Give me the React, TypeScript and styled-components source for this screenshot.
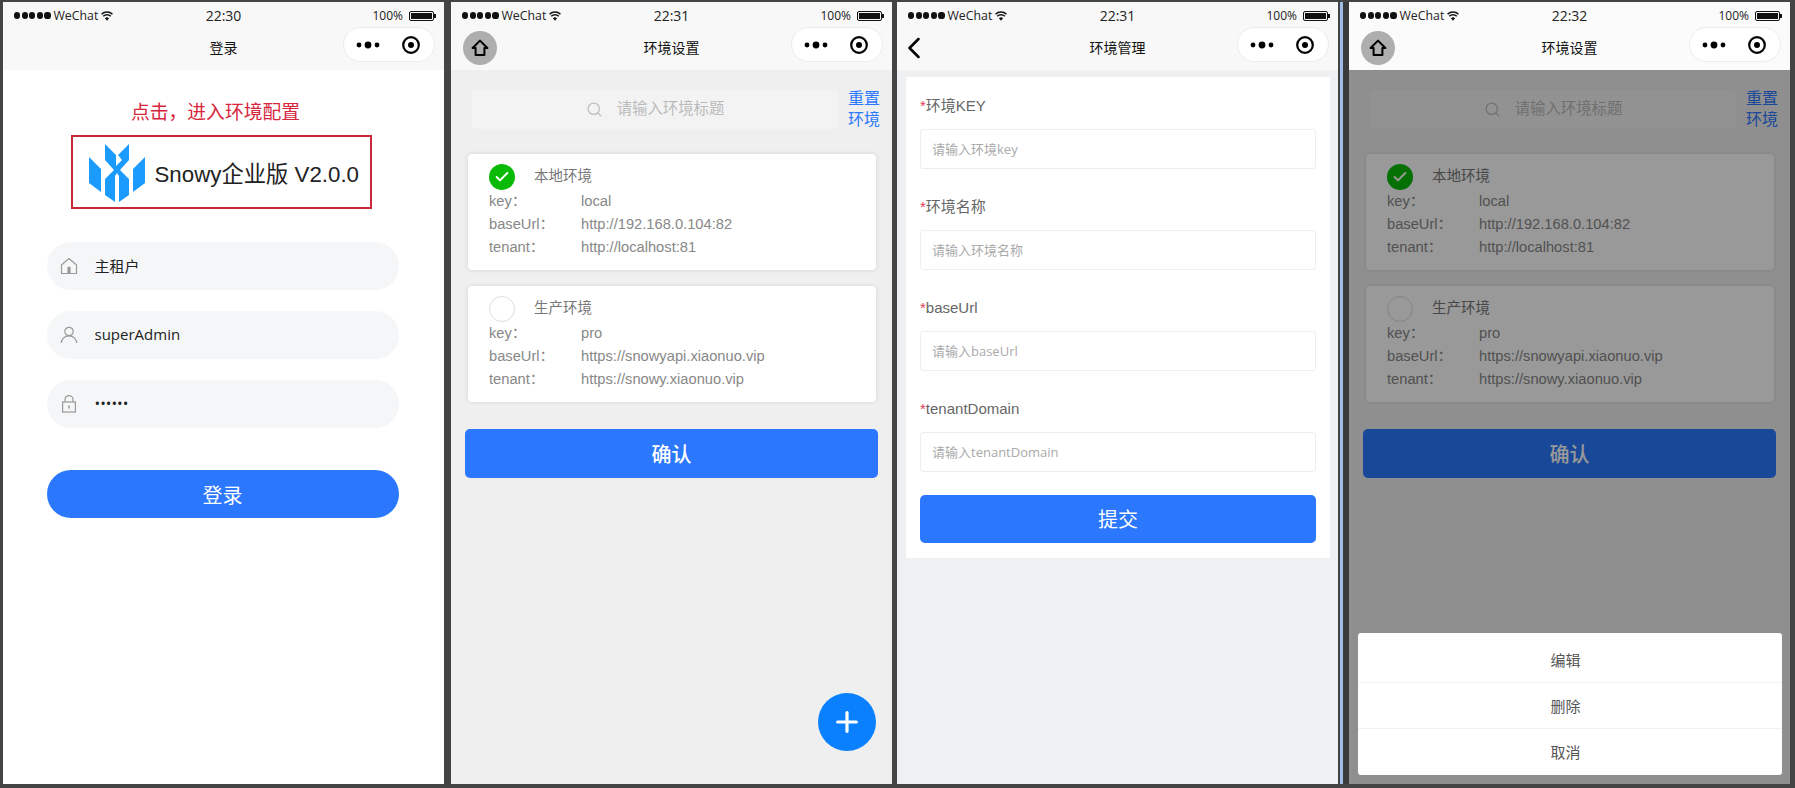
import React from "react";
import styled, { createGlobalStyle } from "styled-components";
import { Check, ChevronLeft, Plus, Search } from "lucide-react";

const UI_FONT = `"Open Sans", "Noto Sans CJK SC", sans-serif`;
const ARIAL_FONT = `"Liberation Sans", "Noto Sans CJK SC", sans-serif`;
const BLUE = "#2b78fe";

const ENVS = [
  {
    title: "本地环境",
    key: "local",
    baseUrl: "http://192.168.0.104:82",
    tenant: "http://localhost:81",
    checked: true,
  },
  {
    title: "生产环境",
    key: "pro",
    baseUrl: "https://snowyapi.xiaonuo.vip",
    tenant: "https://snowy.xiaonuo.vip",
    checked: false,
  },
];

const FIELDS = [
  { label: "环境KEY", placeholder: "请输入环境key" },
  { label: "环境名称", placeholder: "请输入环境名称" },
  { label: "baseUrl", placeholder: "请输入baseUrl" },
  { label: "tenantDomain", placeholder: "请输入tenantDomain" },
];

function StatusBar({ time }: { time: string }) {
  return (
    <StatusRow>
      <StatusLeft>
        <SignalDots>
          {[0, 1, 2, 3, 4].map((i) => (
            <SignalDot key={i} />
          ))}
        </SignalDots>
        <span>WeChat</span>
        <svg width="12" height="10" viewBox="0 0 12 10">
          <path d="M0.5 3.2a7.8 7.8 0 0 1 11 0" fill="none" stroke="#111" strokeWidth="1.5" />
          <path d="M2.2 5.3a5.4 5.4 0 0 1 7.6 0" fill="none" stroke="#111" strokeWidth="1.5" />
          <path d="M3.9 7.2a3 3 0 0 1 4.2 0L6 9.8z" fill="#111" />
        </svg>
      </StatusLeft>
      <StatusTime>{time}</StatusTime>
      <StatusRight>
        <span>100%</span>
        <Battery>
          <BatteryFill />
        </Battery>
        <BatteryTip />
      </StatusRight>
    </StatusRow>
  );
}

function Capsule() {
  return (
    <CapsuleBox>
      <svg width="24" height="8" viewBox="0 0 24 8">
        <circle cx="3" cy="4" r="2.4" fill="#000" />
        <circle cx="12" cy="4" r="3.4" fill="#000" />
        <circle cx="21" cy="4" r="2.4" fill="#000" />
      </svg>
      <svg width="18" height="18" viewBox="0 0 18 18">
        <circle cx="9" cy="9" r="7.8" fill="none" stroke="#000" strokeWidth="2.2" />
        <circle cx="9" cy="9" r="3" fill="#000" />
      </svg>
    </CapsuleBox>
  );
}

function HomeBadge() {
  return (
    <HomeButton>
      <svg width="18" height="18" viewBox="0 0 18 18">
        <path
          d="M9 1.6 16.4 9H13.4V16H4.600V9H1.600Z"
          fill="none"
          stroke="#000"
          strokeWidth="2"
          strokeLinejoin="round"
        />
      </svg>
    </HomeButton>
  );
}

function NavBar({
  title,
  time,
  left,
  $bright,
}: {
  title: string;
  time: string;
  left?: React.ReactNode;
  $bright?: boolean;
}) {
  return (
    <Header $bright={$bright}>
      <StatusBar time={time} />
      <NavRow>
        <NavLeft>{left}</NavLeft>
        <NavTitle>{title}</NavTitle>
        <Capsule />
      </NavRow>
    </Header>
  );
}

function LoginField({
  icon,
  value,
  type = "text",
}: {
  icon: React.ReactNode;
  value: string;
  type?: string;
}) {
  return (
    <PillField>
      <PillIcon>{icon}</PillIcon>
      <PillInput type={type} value={value} readOnly />
    </PillField>
  );
}

function LoginPage() {
  return (
    <Phone>
      <NavBar title="登录" time="22:30" />
      <LoginBody>
        <Hint>点击，进入环境配置</Hint>
        <LogoBox>
          <svg width="58" height="59" viewBox="0 0 58 59">
            <g fill="#1a9bfd">
              <polygon points="1,14 13,26 13,49 1,40" />
              <polygon points="57,14 45,26 45,49 57,40" />
              <polygon points="17,1 28,12 28,23 34,17 30,12 41,1 41,17 32,27 41,36 41,52 31,59 31,33 29,30 27,33 27,59 17,52 17,36 26,27 17,17" />
            </g>
          </svg>
          <LogoText>Snowy企业版 V2.0.0</LogoText>
        </LogoBox>
        <LoginForm>
          <LoginField
            value="主租户"
            icon={
              <svg width="18" height="18" viewBox="0 0 18 18">
                <path
                  d="M1.5 8 9 1.5 16.5 8V16.5H1.5Z"
                  fill="none"
                  stroke="#999"
                  strokeWidth="1.2"
                  strokeLinejoin="round"
                />
                <path d="M7.4 16.5V11a1.6 1.6 0 0 1 3.2 0V16.5Z" fill="#999" />
              </svg>
            }
          />
          <LoginField
            value="superAdmin"
            icon={
              <svg width="18" height="18" viewBox="0 0 18 18">
                <circle cx="9" cy="5.5" r="4.2" fill="none" stroke="#999" strokeWidth="1.2" />
                <path d="M1.2 17c.6-4.4 3.8-7.2 7.8-7.2s7.2 2.8 7.8 7.2" fill="none" stroke="#999" strokeWidth="1.2" />
              </svg>
            }
          />
          <LoginField
            value="123456"
            type="password"
            icon={
              <svg width="18" height="18" viewBox="0 0 18 18">
                <rect x="2.6" y="7" width="12.8" height="10" fill="none" stroke="#999" strokeWidth="1.2" />
                <path d="M5 7V4.6a4 4 0 0 1 8 0V7" fill="none" stroke="#999" strokeWidth="1.2" />
                <rect x="8.2" y="10.5" width="1.6" height="3" fill="#999" />
              </svg>
            }
          />
        </LoginForm>
        <RoundButton>登录</RoundButton>
      </LoginBody>
    </Phone>
  );
}

function EnvSettingsPage({ time, withSheet }: { time: string; withSheet?: boolean }) {
  return (
    <Phone $seam={withSheet}>
      <NavBar title="环境设置" time={time} left={<HomeBadge />} $bright={withSheet} />
      <GrayBody>
        <SearchRow>
          <SearchBox>
            <Search size={17} color="#bdbdbd" strokeWidth={1.8} />
            <SearchText>请输入环境标题</SearchText>
          </SearchBox>
          <ResetLink>重置环境</ResetLink>
        </SearchRow>
        <CardList>
          {ENVS.map((env) => (
            <EnvCard key={env.key}>
              <CardHead>
                <CheckCircle $checked={env.checked}>
                  {env.checked && <Check size={16} color="#fff" strokeWidth={3} />}
                </CheckCircle>
                <CardTitle>{env.title}</CardTitle>
              </CardHead>
              <InfoRow>
                <InfoLabel>key：</InfoLabel>
                <span>{env.key}</span>
              </InfoRow>
              <InfoRow>
                <InfoLabel>baseUrl：</InfoLabel>
                <span>{env.baseUrl}</span>
              </InfoRow>
              <InfoRow>
                <InfoLabel>tenant：</InfoLabel>
                <span>{env.tenant}</span>
              </InfoRow>
            </EnvCard>
          ))}
        </CardList>
        <ConfirmButton>确认</ConfirmButton>
        {!withSheet && (
          <Fab>
            <Plus size={32} color="#fff" strokeWidth={2.4} />
          </Fab>
        )}
        {withSheet && (
          <>
            <Overlay />
            <ActionSheet>
              <SheetItem>编辑</SheetItem>
              <SheetItem>删除</SheetItem>
              <SheetItem>取消</SheetItem>
            </ActionSheet>
          </>
        )}
      </GrayBody>
    </Phone>
  );
}

function EnvManagePage() {
  return (
    <Phone>
      <NavBar title="环境管理" time="22:31" left={<BackIcon size={36} strokeWidth={1.7} />} />
      <ManageBody>
        <FormCard>
          {FIELDS.map((field) => (
            <FormItem key={field.label}>
              <FormLabel>
                <Star>*</Star>
                {field.label}
              </FormLabel>
              <FormInput placeholder={field.placeholder} readOnly />
            </FormItem>
          ))}
          <SubmitButton>提交</SubmitButton>
        </FormCard>
      </ManageBody>
    </Phone>
  );
}

export default function App() {
  return (
    <>
      <GlobalStyle />
      <Screens>
        <LoginPage />
        <EnvSettingsPage time="22:31" />
        <EnvManagePage />
        <EnvSettingsPage time="22:32" withSheet />
      </Screens>
    </>
  );
}

const GlobalStyle = createGlobalStyle`
  html, body {
    margin: 0;
    height: 100%;
    background: #444;
    overflow: hidden;
    font-family: ${UI_FONT};
  }
  * {
    box-sizing: border-box;
  }
`;

const Screens = styled.div`
  display: grid;
  grid-template-columns: repeat(4, 441px);
  justify-content: start;
  column-gap: 7px;
  height: 788px;
  padding: 2px 0 4px 3px;

  & > :nth-child(3) {
    margin-left: -2px;
  }
  & > :nth-child(4) {
    margin-left: 2px;
  }
`;

const Phone = styled.section<{ $seam?: boolean }>`
  display: flex;
  flex-direction: column;
  width: 441px;
  height: 782px;
  background: #fff;
  overflow: hidden;
  box-shadow: ${(p) => (p.$seam ? "-6px 0 0 #3a3a3a, -9px 0 0 #9dbde8" : "none")};
`;

const Header = styled.header<{ $bright?: boolean }>`
  flex: none;
  height: 68px;
  background: ${(p) => (p.$bright ? "#fbfbfb" : "#f8f8f8")};
`;

const StatusRow = styled.div`
  position: relative;
  display: flex;
  justify-content: space-between;
  align-items: center;
  height: 24px;
  padding: 3px 8px 0 11px;
  font-size: 12.3px;
  color: #222;
`;

const StatusLeft = styled.div`
  display: flex;
  align-items: center;
  gap: 3px;
`;

const SignalDots = styled.div`
  display: flex;
  gap: 1.4px;
`;

const SignalDot = styled.i`
  width: 6.2px;
  height: 6.2px;
  border-radius: 50%;
  background: #111;
`;

const StatusTime = styled.span`
  position: absolute;
  left: 0;
  right: 0;
  text-align: center;
  font-size: 14px;
`;

const StatusRight = styled.div`
  display: flex;
  align-items: center;

  & > span {
    margin-right: 6px;
    font-size: 12px;
  }
`;

const Battery = styled.div`
  width: 25px;
  height: 10px;
  padding: 1px;
  border: 1px solid #111;
  border-radius: 2px;
`;

const BatteryFill = styled.div`
  height: 100%;
  background: #111;
`;

const BatteryTip = styled.i`
  width: 2px;
  height: 4px;
  background: #111;
`;

const NavRow = styled.div`
  position: relative;
  display: flex;
  justify-content: space-between;
  align-items: center;
  height: 44px;
  padding: 0 9px 7px 12px;
`;

const NavLeft = styled.div`
  display: flex;
  align-items: center;
  width: 40px;
  margin-top: 6px;
`;

const NavTitle = styled.h1`
  position: absolute;
  left: 0;
  right: 0;
  margin: 5px 0 0;
  text-align: center;
  font-size: 14px;
  font-weight: 400;
  color: #111;
`;

const BackIcon = styled(ChevronLeft)`
  flex: none;
  margin-left: -13px;
  color: #000;
`;

const CapsuleBox = styled.div`
  position: relative;
  display: flex;
  justify-content: space-between;
  align-items: center;
  width: 92px;
  height: 35px;
  padding: 0 14px 0 12px;
  background: #fff;
  border: 1px solid #ececec;
  border-radius: 18px;
`;

const HomeButton = styled.div`
  display: flex;
  justify-content: center;
  align-items: center;
  width: 34px;
  height: 34px;
  border-radius: 50%;
  background: #aeaeae;
`;

const LoginBody = styled.main`
  display: flex;
  flex-direction: column;
  align-items: center;
  flex: 1;
  padding-top: 30px;
`;

const Hint = styled.p`
  margin: 0 0 10px -16px;
  font-size: 18.8px;
  line-height: 25px;
  color: #d6263c;
`;

const LogoBox = styled.div`
  display: flex;
  align-items: center;
  gap: 9px;
  width: 301px;
  height: 74px;
  margin-left: -5px;
  padding-left: 15px;
  border: 2px solid #c8293a;
`;

const LogoText = styled.span`
  font-family: ${ARIAL_FONT};
  font-size: 22.3px;
  white-space: nowrap;
  color: #222;
`;

const LoginForm = styled.div`
  display: flex;
  flex-direction: column;
  gap: 21px;
  width: 352px;
  margin: 33px 0 42px -2px;
`;

const PillField = styled.div`
  display: flex;
  align-items: center;
  height: 48px;
  padding-left: 13px;
  background: #f5f6f7;
  border-radius: 24px;
`;

const PillIcon = styled.span`
  display: flex;
  width: 35px;
`;

const PillInput = styled.input`
  flex: 1;
  min-width: 0;
  margin-bottom: 2px;
  padding: 0;
  border: none;
  outline: none;
  background: transparent;
  font-family: ${UI_FONT};
  font-size: 15px;
  color: #222;
`;

const RoundButton = styled.button`
  width: 352px;
  height: 48px;
  margin-left: -2px;
  border: none;
  border-radius: 24px;
  background: ${BLUE};
  color: #fff;
  font-family: ${UI_FONT};
  font-size: 20px;
`;

const GrayBody = styled.main`
  position: relative;
  display: flex;
  flex-direction: column;
  flex: 1;
  padding: 18px 14px 0;
  background: #efefef;
`;

const SearchRow = styled.div`
  display: flex;
  align-items: center;
  gap: 10px;
  margin-right: -2px;
  padding-left: 7px;
`;

const SearchBox = styled.div`
  display: flex;
  justify-content: center;
  align-items: center;
  gap: 14px;
  flex: 1;
  height: 39px;
  border-radius: 4px;
  background: #f3f3f3;
`;

const SearchText = styled.span`
  margin-bottom: 3px;
  font-size: 15.4px;
  color: #bbb;
`;

const ResetLink = styled.div`
  width: 32px;
  font-size: 16px;
  line-height: 21px;
  color: ${BLUE};
`;

const CardList = styled.div`
  display: flex;
  flex-direction: column;
  gap: 16px;
  margin: 24px 2px 27px 3px;
`;

const EnvCard = styled.article`
  height: 116px;
  padding: 10px 0 0 21px;
  border-radius: 4px;
  background: #fff;
  box-shadow: 0 0 4px rgba(0, 0, 0, 0.12);
  font-family: ${ARIAL_FONT};
  font-size: 14.7px;
  color: #888;
`;

const CardHead = styled.div`
  display: flex;
  align-items: center;
  gap: 19px;
  height: 26px;
`;

const CheckCircle = styled.span<{ $checked?: boolean }>`
  display: flex;
  justify-content: center;
  align-items: center;
  width: 26px;
  height: 26px;
  border-radius: 50%;
  border: ${(p) => (p.$checked ? "none" : "1px solid #ddd")};
  background: ${(p) => (p.$checked ? "#09bb07" : "#fff")};
`;

const CardTitle = styled.span`
  margin-bottom: 6px;
  font-family: ${UI_FONT};
  font-size: 14.5px;
  color: #777;
`;

const InfoRow = styled.div`
  display: flex;
  line-height: 23px;
`;

const InfoLabel = styled.span`
  width: 92px;
`;

const ConfirmButton = styled.button`
  height: 49px;
  padding-bottom: 2px;
  border: none;
  border-radius: 5px;
  background: ${BLUE};
  color: #fff;
  font-family: ${UI_FONT};
  font-size: 20px;
  font-weight: 500;
`;

const Fab = styled.div`
  position: absolute;
  left: 367px;
  bottom: 33px;
  display: flex;
  justify-content: center;
  align-items: center;
  width: 58px;
  height: 58px;
  border-radius: 50%;
  background: #0a80ff;
`;

const Overlay = styled.div`
  position: absolute;
  inset: 0;
  background: rgba(0, 0, 0, 0.4);
`;

const ActionSheet = styled.div`
  position: absolute;
  left: 9px;
  right: 8px;
  bottom: 9px;
  padding: 3px 0 1px;
  border-radius: 3px;
  background: #fff;
`;

const SheetItem = styled.div`
  display: flex;
  justify-content: center;
  align-items: center;
  height: 46px;
  padding-right: 9px;
  font-size: 15px;
  color: #555;

  & + & {
    border-top: 1px solid #f2f2f2;
  }
`;

const ManageBody = styled.main`
  flex: 1;
  padding: 7px 8px 0 9px;
  background: #eff0f1;
`;

const FormCard = styled.div`
  padding: 17px 14px 15px;
  background: #fff;
`;

const FormItem = styled.div`
  display: flex;
  flex-direction: column;
  height: 101px;
`;

const FormLabel = styled.label`
  font-family: ${ARIAL_FONT};
  font-size: 15px;
  line-height: 24px;
  margin-bottom: 11px;
  color: #666;
`;

const Star = styled.span`
  color: #e23b54;
`;

const FormInput = styled.input`
  height: 40px;
  padding: 0 11px;
  border: 1px solid #eee;
  border-radius: 3px;
  outline: none;
  font-family: ${UI_FONT};
  font-size: 13px;

  &::placeholder {
    color: #aaa;
  }
`;

const SubmitButton = styled.button`
  display: block;
  width: 100%;
  height: 48px;
  margin-top: -3px;
  padding-bottom: 2px;
  border: none;
  border-radius: 5px;
  background: ${BLUE};
  color: #fff;
  font-family: ${UI_FONT};
  font-size: 20px;
`;
